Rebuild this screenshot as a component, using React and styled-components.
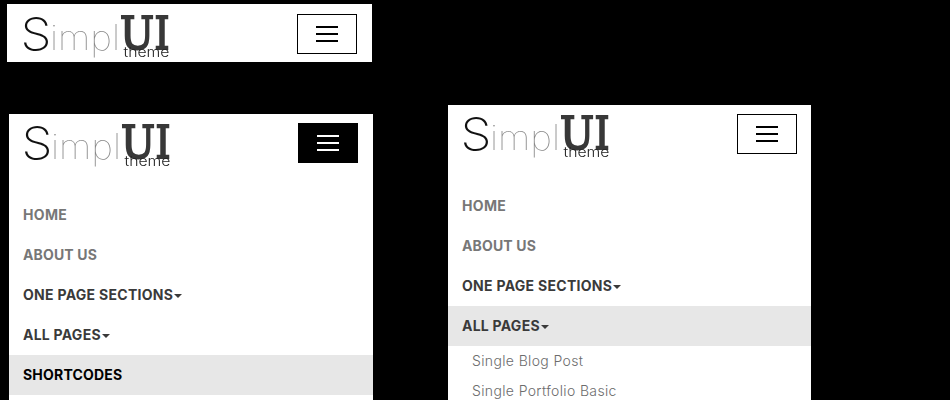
import React from "react";
import styled, { createGlobalStyle } from "styled-components";

const GlobalStyle = createGlobalStyle`
  * { box-sizing: border-box; }
  body { margin: 0; background: #000; overflow: hidden; }
`;

const Page = styled.main`
  display: flex;
  width: 950px;
  height: 400px;
  overflow: hidden;
  background: #000;
  font-family: Inter, sans-serif;
`;

const Column = styled.div`
  flex: none;
  display: flex;
  flex-direction: column;
  width: ${(p) => p.$width}px;
  padding-top: ${(p) => p.$top}px;
`;

const Panel = styled.section`
  flex: none;
  width: ${(p) => p.$width}px;
  height: ${(p) => p.$height}px;
  margin: 0 0 ${(p) => p.$gap || 0}px ${(p) => p.$left}px;
  background: #fff;
`;

const Header = styled.header`
  display: flex;
  justify-content: space-between;
  align-items: flex-start;
  padding-left: ${(p) => p.$inset}px;
  padding-right: ${(p) => p.$end}px;
  height: ${(p) => p.$height}px;
`;

const LogoSvg = styled.svg`
  display: block;
  flex: none;
  overflow: visible;
  margin-top: ${(p) => p.$shift}px;
  will-change: transform;
`;

const Toggle = styled.button`
  display: flex;
  flex-direction: column;
  align-items: center;
  justify-content: center;
  gap: 5px;
  width: 60px;
  height: 40px;
  margin: ${(p) => p.$top}px 0 0;
  padding: 0;
  border: 1px solid #000;
  border-radius: 0;
  color: ${(p) => (p.$active ? "#fff" : "#000")};
  background: ${(p) => (p.$active ? "#000" : "#fff")};
`;

const Bar = styled.span`
  width: 22px;
  height: 2px;
  background: currentColor;
`;

const Menu = styled.nav`
  display: flex;
  flex-direction: column;
`;

const MenuItem = styled.a`
  display: flex;
  align-items: center;
  height: 40px;
  padding: 0 0 2px 14px;
  font-size: 14px;
  font-weight: 700;
  white-space: nowrap;
  letter-spacing: ${(p) => p.$spacing || 0}px;
  color: ${(p) => p.$color};
  background: ${(p) => (p.$highlight ? "#e7e7e7" : "transparent")};
`;

const Caret = styled.span`
  margin: 4px 0 0 1px;
  border: 4px solid transparent;
  border-top-color: currentColor;
  border-bottom: 0;
`;

const SubItem = styled.a`
  display: flex;
  align-items: center;
  height: 30px;
  padding: 0 0 2px 24px;
  font-size: 14px;
  font-weight: 300;
  white-space: nowrap;
  letter-spacing: 0.36px;
  color: #6c6c6c;
`;

function Logo({ shift = 0 }) {
  return (
    <LogoSvg $shift={shift} width="150" height="50" viewBox="0 0 150 50" aria-label="SimplUI theme">
      <text x="-2.5" y="38.5" fontFamily="Inter" fontWeight="200" fontSize="45" fill="#111" textLength="31" lengthAdjust="spacingAndGlyphs">S</text>
      <text x="27" y="39" fontFamily="Inter" fontWeight="100" fontSize="35" fill="#888" textLength="70" lengthAdjust="spacingAndGlyphs">impl</text>
      <g fontFamily="DejaVu Serif" fontWeight="400" fontSize="44" fill="#383838" stroke="#383838" strokeWidth="2">
        <text x="97" y="38" textLength="34" lengthAdjust="spacingAndGlyphs">U</text>
        <text x="131.5" y="38" textLength="15" lengthAdjust="spacingAndGlyphs">I</text>
      </g>
      <text x="100.5" y="46" fontFamily="Inter" fontWeight="300" fontSize="13.5" fill="#222" textLength="46" lengthAdjust="spacingAndGlyphs">theme</text>
    </LogoSvg>
  );
}

function MenuToggle({ top, active }) {
  return (
    <Toggle $top={top} $active={active} aria-label="Menu">
      <Bar /><Bar /><Bar />
    </Toggle>
  );
}

function MainItems({ pagesOpen }) {
  return (
    <>
      <MenuItem $color="#777" $spacing={0.35}>HOME</MenuItem>
      <MenuItem $color="#777" $spacing={0.15}>ABOUT US</MenuItem>
      <MenuItem $color="#3a3a3a" $spacing={0.29}>ONE PAGE SECTIONS<Caret /></MenuItem>
      <MenuItem $color="#3a3a3a" $spacing={0.25} $highlight={pagesOpen}>ALL PAGES<Caret /></MenuItem>
    </>
  );
}

export default function App() {
  return (
    <>
      <GlobalStyle />
      <Page>
        <Column $width={448} $top={4}>
          <Panel $left={7} $width={365} $height={58} $gap={52}>
            <Header $inset={16} $end={15} $height={58}>
              <Logo shift={7} />
              <MenuToggle top={10} />
            </Header>
          </Panel>
          <Panel $left={9} $width={364} $height={286}>
            <Header $inset={15} $end={15} $height={81}>
              <Logo shift={6} />
              <MenuToggle top={9} active />
            </Header>
            <Menu>
              <MainItems />
              <MenuItem $color="#000" $spacing={0.2} $highlight>SHORTCODES</MenuItem>
            </Menu>
          </Panel>
        </Column>
        <Column $width={363} $top={105}>
          <Panel $left={0} $width={363} $height={295}>
            <Header $inset={15} $end={14} $height={81}>
              <Logo shift={6} />
              <MenuToggle top={9} />
            </Header>
            <Menu>
              <MainItems pagesOpen />
              <SubItem>Single Blog Post</SubItem>
              <SubItem>Single Portfolio Basic</SubItem>
            </Menu>
          </Panel>
        </Column>
      </Page>
    </>
  );
}
